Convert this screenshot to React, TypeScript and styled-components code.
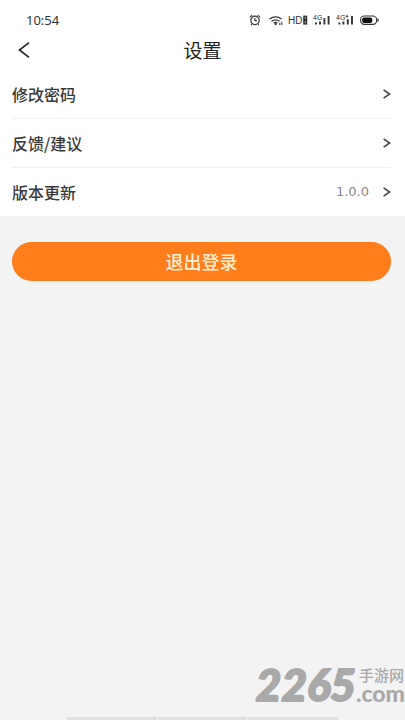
import React from "react";
import styled, { createGlobalStyle } from "styled-components";

const GlobalStyle = createGlobalStyle`
  *, *::before, *::after { box-sizing: border-box; }
  body {
    margin: 0;
    background: #f3f3f3;
    color: #333;
    font-family: "Noto Sans", "Noto Sans CJK SC", sans-serif;
  }
`;

const Page = styled.div`
  position: relative;
  display: flex;
  flex-direction: column;
  min-height: 100vh;
  background: #f3f3f3;
  overflow: hidden;
`;

const StatusBar = styled.div`
  display: flex;
  align-items: center;
  justify-content: space-between;
  height: 30px;
  padding: 10px 24px 0 26px;
  background: #fff;
`;

const Clock = styled.time`
  font: 400 13px/20px "Noto Sans", sans-serif;
  color: #333;
`;

const StatusIcons = styled.svg`
  display: block;
  width: 132px;
  height: 16px;
`;

const NavBar = styled.header`
  display: grid;
  grid-template-columns: 48px 1fr 48px;
  align-items: center;
  height: 40px;
  background: #fff;
`;

const BackButton = styled.button`
  display: flex;
  align-items: center;
  height: 40px;
  padding: 0 0 0 18px;
  border: 0;
  background: none;
  color: #222;
`;

const Title = styled.h1`
  margin: 0;
  text-align: center;
  font: 400 19px/24px "Noto Sans CJK SC", sans-serif;
  color: #222;
`;

const Menu = styled.nav`
  padding: 0 14px 0 12px;
  background: #fff;
`;

const MenuRow = styled.a`
  display: flex;
  align-items: center;
  gap: 13px;
  height: 49px;
  color: #3a3a3a;
  text-decoration: none;
  border-bottom: 1px solid #f2f2f2;

  &:last-child {
    height: 48px;
    border-bottom: 0;
  }
`;

const RowLabel = styled.span`
  flex: 1;
  font: 500 16px/24px "Noto Sans CJK SC", sans-serif;
`;

const RowValue = styled.span`
  font: 400 13px/24px "DejaVu Sans", sans-serif;
  color: #888;
`;

const Actions = styled.div`
  flex: 1;
  padding: 26px 14px 0 12px;
`;

const LogoutButton = styled.button`
  display: block;
  width: 100%;
  height: 39px;
  padding: 0;
  border: 0;
  border-radius: 20px;
  background: #ff7d1a;
  color: #fff0d8;
  font: 500 18px/39px "Noto Sans CJK SC", sans-serif;
`;

const Watermark = styled.div`
  position: absolute;
  right: 0;
  bottom: 16px;
  display: flex;
  align-items: flex-end;
  color: #a9a9a9;
`;

const WatermarkNumber = styled.span`
  font: italic 900 44px/40px Lato, sans-serif;
  -webkit-text-stroke: 2px #a9a9a9;
`;

const WatermarkSite = styled.span`
  display: flex;
  flex-direction: column;
  align-items: flex-end;
`;

const WatermarkName = styled.span`
  padding-right: 1px;
  font: 500 15px/14px "Noto Sans CJK SC", sans-serif;
`;

const WatermarkDomain = styled.span`
  font: 900 23px/22px Lato, sans-serif;
`;

const HomeStrip = styled.div`
  display: grid;
  grid-template-columns: repeat(3, 1fr);
  gap: 1px;
  height: 3px;
  margin: 0 67px;
`;

const HomeSegment = styled.div`
  background: #e0e0e0;
`;

const Chevron = () => (
  <svg width="9" height="12" viewBox="0 0 9 12" fill="none" stroke="#444" strokeWidth="1.6" aria-hidden="true">
    <path d="M1.6 1.8 7.6 6 1.6 10.2" />
  </svg>
);

const rows = [
  { label: "修改密码" },
  { label: "反馈/建议" },
  { label: "版本更新", value: "1.0.0" },
];

const PhoneStatus = () => (
  <StatusIcons viewBox="0 0 132 16" fill="none" stroke="#333" aria-label="HD 4G">
    <circle cx="6" cy="8.4" r="4.2" strokeWidth="1.2" />
    <path d="M6 6v2.6h2M.8 5.2 3.2 3.2M11.2 5.2 8.8 3.2M3 12.2l-1 1M9 12.2l1 1" strokeWidth="1.1" />
    <path d="M20.5 7q6-4.4 12 0M22.6 9.2q4-2.8 8 0M24.8 11.2q1.8-1.4 3.6 0" strokeWidth="1.3" />
    <circle cx="26.6" cy="12.2" r="1" fill="#333" stroke="none" />
    <path d="M30.8 10.8v2.4M32.8 9.8v3.4" strokeWidth="1" />
    <text x="39" y="12" fill="#333" stroke="none" fontFamily="Liberation Sans" fontSize="10">HD</text>
    <rect x="55" y="4.4" width="2.4" height="3" strokeWidth="1.6" />
    <rect x="55" y="8.8" width="2.4" height="3" strokeWidth="1.6" />
    <text x="64" y="8" fill="#333" stroke="none" fontFamily="Liberation Sans" fontSize="7">4G</text>
    <path d="M67 10.4v2.2M71 9.4v3.2M75.4 6.2v6.4M79.6 4v8.6" strokeWidth="1.9" />
    <text x="87" y="8" fill="#333" stroke="none" fontFamily="Liberation Sans" fontSize="7">4G</text>
    <path d="M98 2.8v3M96.6 4.3h3" strokeWidth=".8" />
    <path d="M90.4 10.4v2.2M94.4 9.4v3.2M98.8 7.2v5.4M103 4v8.6" strokeWidth="1.9" />
    <rect x="111.6" y="4" width="16" height="8.4" rx="3.6" strokeWidth="1.1" />
    <rect x="113.2" y="5.4" width="10" height="5.6" rx="1.8" fill="#111" stroke="none" />
    <path d="M129 6.6v3.2" strokeWidth="1.2" />
  </StatusIcons>
);

export default function App() {
  return (
    <>
      <GlobalStyle />
      <Page>
        <StatusBar>
          <Clock>10:54</Clock>
          <PhoneStatus />
        </StatusBar>
        <NavBar>
          <BackButton type="button" aria-label="返回">
            <svg width="12" height="18" viewBox="0 0 12 18" fill="none" stroke="currentColor" strokeWidth="1.6" aria-hidden="true">
              <path d="M11 1.6 1.4 9 11 16.4" />
            </svg>
          </BackButton>
          <Title>设置</Title>
        </NavBar>
        <Menu>
          {rows.map((row) => (
            <MenuRow href="#" key={row.label}>
              <RowLabel>{row.label}</RowLabel>
              {row.value && <RowValue>{row.value}</RowValue>}
              <Chevron />
            </MenuRow>
          ))}
        </Menu>
        <Actions>
          <LogoutButton type="button">退出登录</LogoutButton>
        </Actions>
        <HomeStrip>
          <HomeSegment />
          <HomeSegment />
          <HomeSegment />
        </HomeStrip>
        <Watermark>
          <WatermarkNumber>2265</WatermarkNumber>
          <WatermarkSite>
            <WatermarkName>手游网</WatermarkName>
            <WatermarkDomain>.com</WatermarkDomain>
          </WatermarkSite>
        </Watermark>
      </Page>
    </>
  );
}
